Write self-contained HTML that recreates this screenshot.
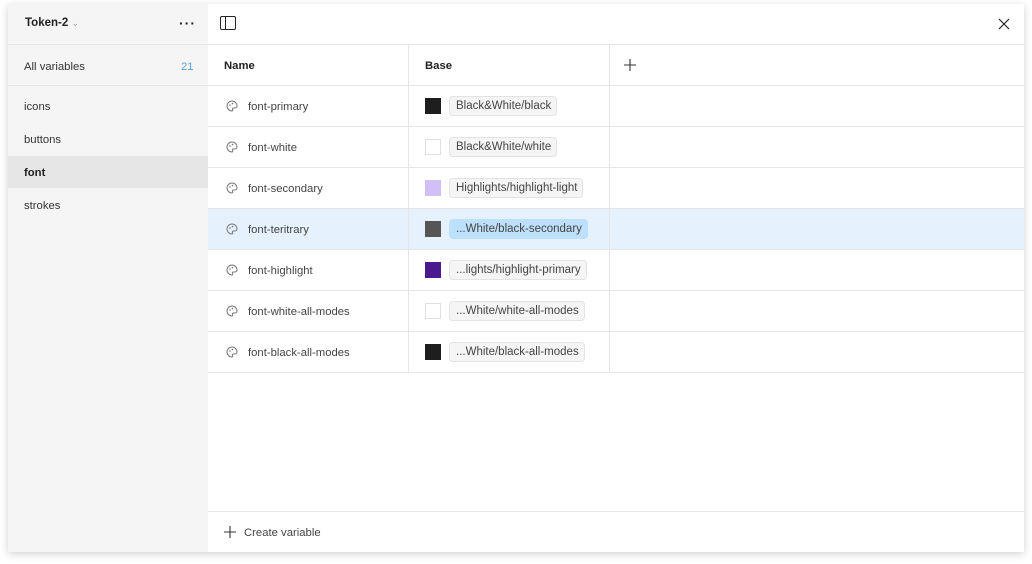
<!DOCTYPE html><html><head><style>
*{box-sizing:border-box;margin:0;padding:0}
body{width:1032px;height:564px;background:#fff;font-family:"Liberation Sans",sans-serif;font-size:11.3px;color:#333;position:relative;overflow:hidden}
.win{position:absolute;left:8px;top:4px;width:1016px;height:548px;background:#fff;box-shadow:0 2px 8px rgba(0,0,0,.18);overflow:hidden}
.side{position:absolute;left:0;top:0;width:200px;height:548px;background:#f5f5f5}
.abs{position:absolute}
.hl{position:absolute;height:1px;background:#e6e6e6}
.vl{position:absolute;width:1px;background:#e6e6e6}
.sw{position:absolute;left:417px;width:16px;height:16px;border:1px solid #e0e0e0}
.pill{position:absolute;left:441px;height:20px;border:1px solid #e3e3e3;background:#f5f5f5;border-radius:4px;padding:0 5px 0 6px;line-height:19px;color:#444;font-size:11.5px}
.nm{position:absolute;left:240px;color:#444}
.ic{position:absolute;left:218px}
</style></head><body><div class="win">
<div class="side">
<div class="abs" style="left:17px;top:13px;font-weight:bold;color:#222;font-size:11.5px">Token-2 <span style="font-weight:normal;color:#999;font-size:9px">⌄</span></div>
<div class="abs" style="left:171px;top:11px;font-size:14px;letter-spacing:1px;color:#222;font-weight:bold">···</div>
<div class="hl" style="left:0;top:40px;width:200px"></div>
<div class="abs" style="left:16px;top:57px">All variables</div>
<div class="abs" style="left:173px;top:57px;color:#5a9fd4">21</div>
<div class="hl" style="left:0;top:81px;width:200px"></div>
<div class="abs" style="left:16px;top:97px">icons</div>
<div class="abs" style="left:16px;top:130px">buttons</div>
<div class="abs" style="left:0;top:152px;width:200px;height:32px;background:#e6e6e6"></div>
<div class="abs" style="left:16px;top:163px;font-weight:bold;color:#222">font</div>
<div class="abs" style="left:16px;top:196px">strokes</div>
</div>
<svg class="abs" style="left:212px;top:12px" width="16" height="14"><rect x="0.5" y="0.5" width="15" height="13" rx="1.5" fill="none" stroke="#222"/><line x1="5.5" y1="1" x2="5.5" y2="13" stroke="#222"/></svg>
<svg class="abs" style="left:990px;top:14px" width="12" height="12"><path d="M1 1L11 11M11 1L1 11" stroke="#222" stroke-width="1.2"/></svg>
<div class="hl" style="left:200px;top:40px;width:816px"></div>
<div class="abs" style="left:216px;top:56px;font-weight:bold;color:#222">Name</div>
<div class="abs" style="left:417px;top:56px;font-weight:bold;color:#222">Base</div>
<svg class="abs" style="left:616px;top:55px" width="12" height="12"><path d="M6 0V12M0 6H12" stroke="#333" stroke-width="1.1"/></svg>
<div class="abs" style="left:200px;top:205px;width:816px;height:40px;background:#e5f2fd"></div>
<div class="vl" style="left:400px;top:41px;height:328px"></div>
<div class="vl" style="left:601px;top:41px;height:328px"></div>
<div class="hl" style="left:200px;top:81px;width:816px"></div>
<div class="hl" style="left:200px;top:122px;width:816px"></div>
<div class="hl" style="left:200px;top:163px;width:816px"></div>
<div class="hl" style="left:200px;top:204px;width:816px"></div>
<div class="hl" style="left:200px;top:245px;width:816px"></div>
<div class="hl" style="left:200px;top:286px;width:816px"></div>
<div class="hl" style="left:200px;top:327px;width:816px"></div>
<div class="hl" style="left:200px;top:368px;width:816px"></div>
<div class="hl" style="left:200px;top:507px;width:816px"></div>
<svg class="abs" style="left:216px;top:522px" width="12" height="12"><path d="M6 0V12M0 6H12" stroke="#333" stroke-width="1.1"/></svg>
<div class="abs" style="left:236px;top:523px;color:#444">Create variable</div>

<svg class="ic" style="top:96px" width="12" height="12"><path d="M6 1a5 5 0 1 0 0 10c1 0 1-1 .5-1.6S6.5 8 7.5 8H9a2 2 0 0 0 2-2A5 5 0 0 0 6 1z" fill="none" stroke="#777"/><circle cx="4" cy="5" r=".8" fill="#777"/><circle cx="6.5" cy="3.6" r=".8" fill="#777"/></svg>
<div class="nm" style="top:97px">font-primary</div><div class="sw" style="top:94px;background:#1e1e1e;border-color:#1e1e1e"></div><div class="pill" style="top:92px">Black&amp;White/black</div>
<svg class="ic" style="top:137px" width="12" height="12"><path d="M6 1a5 5 0 1 0 0 10c1 0 1-1 .5-1.6S6.5 8 7.5 8H9a2 2 0 0 0 2-2A5 5 0 0 0 6 1z" fill="none" stroke="#777"/><circle cx="4" cy="5" r=".8" fill="#777"/><circle cx="6.5" cy="3.6" r=".8" fill="#777"/></svg>
<div class="nm" style="top:138px">font-white</div><div class="sw" style="top:135px;background:#fff"></div><div class="pill" style="top:133px">Black&amp;White/white</div>
<svg class="ic" style="top:178px" width="12" height="12"><path d="M6 1a5 5 0 1 0 0 10c1 0 1-1 .5-1.6S6.5 8 7.5 8H9a2 2 0 0 0 2-2A5 5 0 0 0 6 1z" fill="none" stroke="#777"/><circle cx="4" cy="5" r=".8" fill="#777"/><circle cx="6.5" cy="3.6" r=".8" fill="#777"/></svg>
<div class="nm" style="top:179px">font-secondary</div><div class="sw" style="top:176px;background:#d2bff7;border-color:#d2bff7"></div><div class="pill" style="top:174px">Highlights/highlight-light</div>
<svg class="ic" style="top:219px" width="12" height="12"><path d="M6 1a5 5 0 1 0 0 10c1 0 1-1 .5-1.6S6.5 8 7.5 8H9a2 2 0 0 0 2-2A5 5 0 0 0 6 1z" fill="none" stroke="#777"/><circle cx="4" cy="5" r=".8" fill="#777"/><circle cx="6.5" cy="3.6" r=".8" fill="#777"/></svg>
<div class="nm" style="top:220px">font-teritrary</div><div class="sw" style="top:217px;background:#555;border-color:#555"></div><div class="pill" style="top:215px;background:#bee1fb;border-color:#bee1fb">...White/black-secondary</div>
<svg class="ic" style="top:260px" width="12" height="12"><path d="M6 1a5 5 0 1 0 0 10c1 0 1-1 .5-1.6S6.5 8 7.5 8H9a2 2 0 0 0 2-2A5 5 0 0 0 6 1z" fill="none" stroke="#777"/><circle cx="4" cy="5" r=".8" fill="#777"/><circle cx="6.5" cy="3.6" r=".8" fill="#777"/></svg>
<div class="nm" style="top:261px">font-highlight</div><div class="sw" style="top:258px;background:#4b1a8c;border-color:#4b1a8c"></div><div class="pill" style="top:256px">...lights/highlight-primary</div>
<svg class="ic" style="top:301px" width="12" height="12"><path d="M6 1a5 5 0 1 0 0 10c1 0 1-1 .5-1.6S6.5 8 7.5 8H9a2 2 0 0 0 2-2A5 5 0 0 0 6 1z" fill="none" stroke="#777"/><circle cx="4" cy="5" r=".8" fill="#777"/><circle cx="6.5" cy="3.6" r=".8" fill="#777"/></svg>
<div class="nm" style="top:302px">font-white-all-modes</div><div class="sw" style="top:299px;background:#fff"></div><div class="pill" style="top:297px">...White/white-all-modes</div>
<svg class="ic" style="top:342px" width="12" height="12"><path d="M6 1a5 5 0 1 0 0 10c1 0 1-1 .5-1.6S6.5 8 7.5 8H9a2 2 0 0 0 2-2A5 5 0 0 0 6 1z" fill="none" stroke="#777"/><circle cx="4" cy="5" r=".8" fill="#777"/><circle cx="6.5" cy="3.6" r=".8" fill="#777"/></svg>
<div class="nm" style="top:343px">font-black-all-modes</div><div class="sw" style="top:340px;background:#1e1e1e;border-color:#1e1e1e"></div><div class="pill" style="top:338px">...White/black-all-modes</div>
</div></body></html>
